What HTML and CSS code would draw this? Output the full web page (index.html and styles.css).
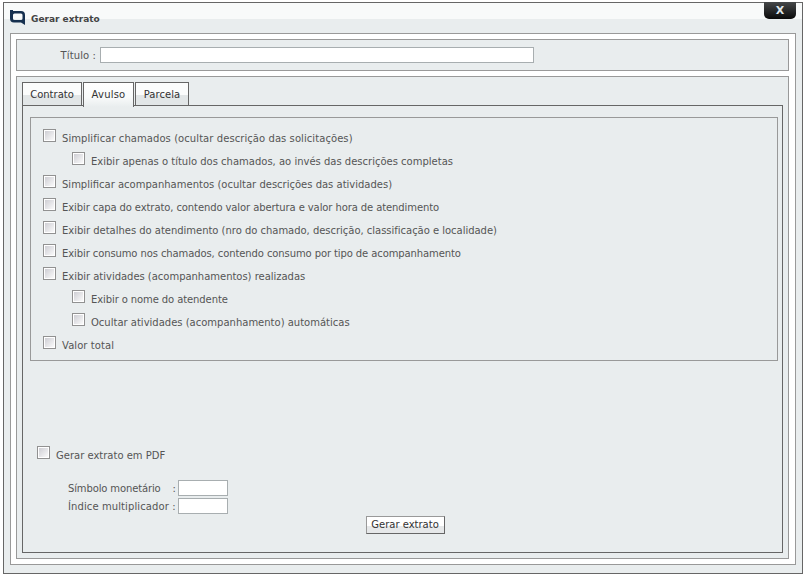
FILE: index.html
```html
<!DOCTYPE html>
<html lang="pt-BR">
<head>
<meta charset="utf-8">
<title>Gerar extrato</title>
<link rel="stylesheet" href="styles.css">
</head>
<body>
<div class="window">
  <header class="titlebar">
    <svg class="logo" width="16" height="15" viewBox="0 0 16 15"><path fill="#16304f" fill-rule="evenodd" d="M0 0H3V1H11Q15 1 15 5V15L11 12.5H4Q0 12.500 0 8.500ZM4.500 3.500H11Q12.500 3.500 12.500 5V8.500Q12.500 10 11 10H4.500Q3 10 3 8.500V5Q3 3.500 4.500 3.500Z"/></svg>
    <h1 class="title">Gerar extrato</h1>
    <button class="close" type="button">X</button>
  </header>
  <div class="panel">
    <div class="box title-box">
      <label class="title-label" for="t">Título :</label>
      <input class="field title-field" id="t" type="text">
    </div>
    <div class="box main-box">
      <div class="tabs">
        <span class="tab t1">Contrato</span>
        <span class="tab t2 active">Avulso</span>
        <span class="tab t3">Parcela</span>
      </div>
      <div class="tab-body">
        <div class="options">
          <label class="opt wide"><input type="checkbox"><span>Simplificar chamados (ocultar descrição das solicitações)</span></label>
          <label class="opt sub"><input type="checkbox"><span>Exibir apenas o título dos chamados, ao invés das descrições completas</span></label>
          <label class="opt"><input type="checkbox"><span>Simplificar acompanhamentos (ocultar descrições das atividades)</span></label>
          <label class="opt tight"><input type="checkbox"><span>Exibir capa do extrato, contendo valor abertura e valor hora de atendimento</span></label>
          <label class="opt snug"><input type="checkbox"><span>Exibir detalhes do atendimento (nro do chamado, descrição, classificação e localidade)</span></label>
          <label class="opt tight"><input type="checkbox"><span>Exibir consumo nos chamados, contendo consumo por tipo de acompanhamento</span></label>
          <label class="opt snug"><input type="checkbox"><span>Exibir atividades (acompanhamentos) realizadas</span></label>
          <label class="opt sub tight"><input type="checkbox"><span>Exibir o nome do atendente</span></label>
          <label class="opt sub"><input type="checkbox"><span>Ocultar atividades (acompanhamento) automáticas</span></label>
          <label class="opt wide"><input type="checkbox"><span>Valor total</span></label>
        </div>
        <label class="opt pdf"><input type="checkbox"><span>Gerar extrato em PDF</span></label>
        <div class="money">
          <label class="money-row"><span class="money-label"><span class="money-tight">Símbolo monetário</span> &nbsp; :</span><input class="field small" type="text"></label>
          <label class="money-row"><span class="money-label">Índice multiplicador :</span><input class="field small" type="text"></label>
        </div>
        <div class="actions"><button class="submit" type="button">Gerar extrato</button></div>
      </div>
    </div>
  </div>
</div>
</body>
</html>
```
FILE: styles.css
```css
* { box-sizing: border-box; }
html, body { margin: 0; padding: 0; background: #fff; }
body { font: 10px/12px "DejaVu Sans", Verdana, sans-serif; color: #555; }
.window {
  width: 800px; height: 572px; margin: 2px 0 0 3px;
  border: 1px solid #666;
  background: linear-gradient(#f8fafa 0, #f8fafa 16px, #e9edee 16px);
  padding: 0 6px 8px;
  display: flex; flex-direction: column;
}
.titlebar { height: 30px; display: flex; align-items: flex-start; flex: none; }
.logo { margin-top: 7px; flex: none; }
.title { margin: 10px 0 0 5px; font: bold 9px/12px "DejaVu Sans", sans-serif; color: #444; flex: 1; }
.close {
  width: 32px; height: 17px; margin: -1px 0 0 0; padding: 0; border: 0; border-radius: 0 0 5px 5px;
  background: linear-gradient(#45484a, #0a0a0a);
  color: #dfe6ea; font: bold 11px/16px "DejaVu Sans", sans-serif; text-align: center;
}
.panel {
  flex: 1; background: #fff; border: 1px solid #999;
  padding: 5px 6px 5px 5px;
  display: flex; flex-direction: column; gap: 5px;
}
.box { border: 1px solid #999; background: #e9edee; }
.title-box { height: 32px; display: flex; align-items: center; }
.title-label { width: 79px; text-align: right; margin-right: 4px; padding-top: 2px; letter-spacing: .1px; }
.field { border: 1px solid #a8aeb0; background: #fff; height: 16px; padding: 0; }
.title-field { width: 434px; }
.main-box { flex: 1; padding: 5px; display: flex; flex-direction: column; }
.tabs { display: flex; gap: 1px; height: 23px; position: relative; z-index: 1; flex: none; }
.tab {
  height: 24px; padding-top: 1px; line-height: 22px; border: 1px solid #666; text-align: center;
  background: linear-gradient(#fbfcfc 0, #fbfcfc 55%, #e2e6e7 55%);
  color: #333;
}
.t1 { width: 60px; }
.t2 { width: 51px; letter-spacing: .2px; }
.t3 { width: 54px; letter-spacing: .05px; }
.tab.active { height: 25px; background: linear-gradient(#fff 0, #f8fafa 60%, #e9edee 100%); border-bottom: 0; }
.tab-body { flex: 1; border: 1px solid #666; padding: 11px 4px 0 7px; display: flex; flex-direction: column; }
.options { height: 244px; border: 1px solid #999; padding: 0 12px; flex: none; }
.opt { display: flex; height: 23px; align-items: flex-start; }
.opt input, .opt span { flex: none; }
.options .opt:first-child { margin-top: 11px; }
.opt > span { margin-left: 6px; padding-top: 4px; }
.opt.sub { padding-left: 29px; }
.wide { letter-spacing: .07px; }
.tight { letter-spacing: -.1px; }
.snug { letter-spacing: -.025px; }
input[type=checkbox] {
  appearance: none; -webkit-appearance: none;
  width: 13px; height: 13px; margin: 0;
  border: 1px solid #919191; background: linear-gradient(135deg, #c9c9cf, #fff);
  box-shadow: inset 0 0 0 1px #fff;
}
.pdf { margin: 85px 0 0 7px; }
.money { margin: 11px 0 0 38px; display: flex; flex-direction: column; gap: 2px; }
.money-row { display: flex; align-items: center; height: 16px; letter-spacing: .1px; }
.money-label { width: 110px; white-space: nowrap; padding-top: 2px; }
.money-tight { letter-spacing: -.13px; margin-right: 2px; }
.small { width: 50px; }
.actions { display: flex; justify-content: center; margin-top: 2px; }
.submit {
  width: 79px; height: 18px; padding: 0; margin-left: 2px;
  border: 1px solid #999; border-right-color: #666; border-bottom-color: #666;
  background: linear-gradient(#fff 0, #fff 55%, #e6e8e9 55%);
  color: #333; font: 10px/14px "DejaVu Sans", sans-serif;
}
```
